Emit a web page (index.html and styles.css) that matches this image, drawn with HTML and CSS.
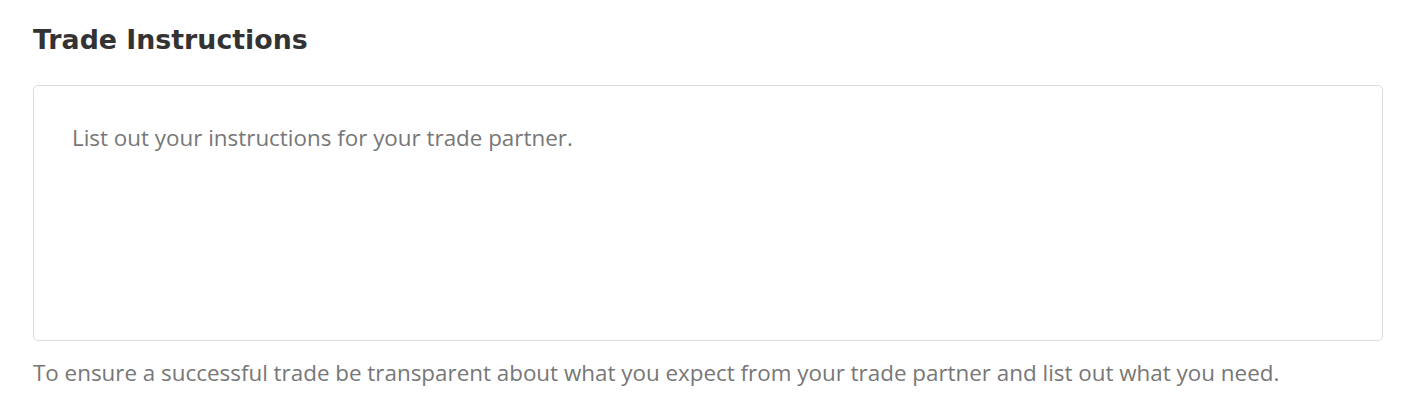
FILE: index.html
```html
<!DOCTYPE html>
<html>
<head>
<meta charset="utf-8">
<link rel="stylesheet" href="styles.css">
</head>
<body>
<section class="panel">
  <h2 class="title">Trade Instructions</h2>
  <div class="box">
    <p class="placeholder">List out your instructions for your trade partner.</p>
  </div>
  <p class="hint">To ensure a successful trade be transparent about what you expect from your trade partner and list out what you need.</p>
</section>
</body>
</html>
```
FILE: styles.css
```css
html, body {
  margin: 0;
  padding: 0;
  background: #ffffff;
}
.panel {
  padding: 24px 25px 0 33px;
  font-family: "Open Sans", "Noto Sans", sans-serif;
}
.title {
  margin: 0;
  font-family: "DejaVu Sans", sans-serif;
  font-weight: bold;
  font-size: 26.8px;
  line-height: 32px;
  color: #333333;
}
.box {
  margin-top: 29px;
  height: 256px;
  border: 1px solid #dcdcdc;
  border-radius: 5px;
  padding: 38px 38px 0 38px;
  box-sizing: border-box;
}
.placeholder {
  margin: 0;
  font-size: 22.4px;
  line-height: 28px;
  color: #777777;
}
.hint {
  margin: 18px 0 0 0;
  font-size: 22.4px;
  line-height: 28px;
  color: #777777;
}
```
